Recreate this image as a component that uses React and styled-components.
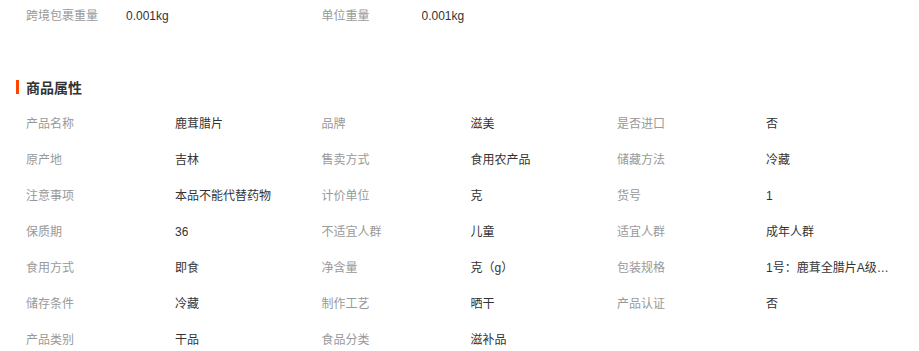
import React from "react"
import styled, { createGlobalStyle } from "styled-components"

const GlobalStyle = createGlobalStyle`
  body {
    margin: 0;
    background: #fff;
    font-family: "Liberation Sans", "Noto Sans CJK SC", sans-serif;
    font-size: 12px;
  }
`

const Page = styled.div`
  width: 919px;
  padding-left: 16px;
  box-sizing: border-box;
`
const Grid = styled.div`
  display: grid;
  grid-template-columns: repeat(3, 295.5px);
  padding-left: 10px;
  margin-top: ${p => p.top || 0}px;
`
const Cell = styled.div`
  display: flex;
  height: ${p => p.h}px;
  line-height: ${p => p.h}px;
  white-space: nowrap;
`
const Label = styled.span`
  width: ${p => p.w}px;
  flex: none;
  color: #999;
`
const Value = styled.span`
  max-width: 130px;
  color: #333;
  overflow: hidden;
  text-overflow: ellipsis;
`
const Heading = styled.h3`
  display: flex;
  align-items: center;
  margin: 45px 0 0;
  height: 20px;
  font-size: 14px;
  font-weight: 700;
  color: #333;
  &::before {
    content: "";
    width: 3px;
    height: 14px;
    margin-right: 7px;
    background: #ff4400;
  }
`

const weights = [
  ["跨境包裹重量", "0.001kg"],
  ["单位重量", "0.001kg"],
]

const attrs = [
  ["产品名称", "鹿茸腊片"],
  ["品牌", "滋美"],
  ["是否进口", "否"],
  ["原产地", "吉林"],
  ["售卖方式", "食用农产品"],
  ["储藏方法", "冷藏"],
  ["注意事项", "本品不能代替药物"],
  ["计价单位", "克"],
  ["货号", "1"],
  ["保质期", "36"],
  ["不适宜人群", "儿童"],
  ["适宜人群", "成年人群"],
  ["食用方式", "即食"],
  ["净含量", "克（g）"],
  ["包装规格", "1号：鹿茸全腊片A级（切片）"],
  ["储存条件", "冷藏"],
  ["制作工艺", "晒干"],
  ["产品认证", "否"],
  ["产品类别", "干品"],
  ["食品分类", "滋补品"],
]

export default function App() {
  return (
    <Page>
      <GlobalStyle />
      <Grid>
        {weights.map(([k, v]) => (
          <Cell key={k} h={32}>
            <Label w={100}>{k}</Label>
            <Value>{v}</Value>
          </Cell>
        ))}
      </Grid>
      <Heading>商品属性</Heading>
      <Grid top={9}>
        {attrs.map(([k, v]) => (
          <Cell key={k} h={36}>
            <Label w={149}>{k}</Label>
            <Value>{v}</Value>
          </Cell>
        ))}
      </Grid>
    </Page>
  )
}
